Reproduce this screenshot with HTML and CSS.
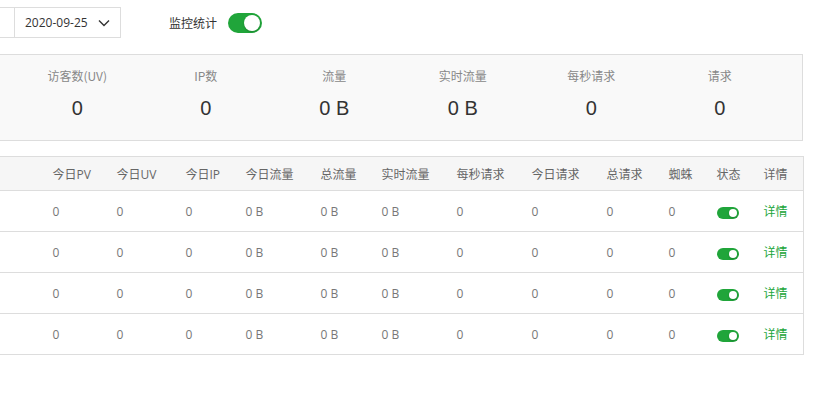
FILE: index.html
```html
<!DOCTYPE html>
<html lang="zh-CN">
<head>
  <meta charset="UTF-8" />
  <meta name="viewport" content="width=device-width, initial-scale=1.0"/>
  <title>网站监控</title>
  <link rel="stylesheet" href="styles.css">
</head>
<body>
  <div class="page">
    <div class="toolbar">
      <div class="site-select"></div>
      <div class="date-select">
        <span>2020-09-25</span>
        <svg class="chevron" width="12" height="8" viewBox="0 0 12 8"><path d="M1 1.5l5 5 5-5" fill="none" stroke="#333" stroke-width="1.4"/></svg>
      </div>
      <label class="monitor">
        <span>监控统计</span>
        <span class="switch big on"></span>
      </label>
    </div>

    <div class="stats">
      <div class="stat"><div class="stat-label">访客数(UV)</div><div class="stat-value">0</div></div>
      <div class="stat"><div class="stat-label">IP数</div><div class="stat-value">0</div></div>
      <div class="stat"><div class="stat-label">流量</div><div class="stat-value">0 B</div></div>
      <div class="stat"><div class="stat-label">实时流量</div><div class="stat-value">0 B</div></div>
      <div class="stat"><div class="stat-label">每秒请求</div><div class="stat-value">0</div></div>
      <div class="stat"><div class="stat-label">请求</div><div class="stat-value">0</div></div>
    </div>

    <table class="sites">
      <colgroup>
        <col style="width: 342px">
        <col style="width: 64px">
        <col style="width: 69px">
        <col style="width: 60px">
        <col style="width: 75px">
        <col style="width: 61px">
        <col style="width: 75px">
        <col style="width: 75px">
        <col style="width: 75px">
        <col style="width: 62px">
        <col style="width: 48px">
        <col style="width: 47px">
        <col style="width: 50px">
      </colgroup>
      <thead>
        <tr>
          <th></th><th>今日PV</th><th>今日UV</th><th>今日IP</th><th>今日流量</th><th>总流量</th><th>实时流量</th><th>每秒请求</th><th>今日请求</th><th>总请求</th><th>蜘蛛</th><th>状态</th><th>详情</th>
        </tr>
      </thead>
      <tbody id="rows"></tbody>
    </table>
  </div>

  <script>
    const siteCount = 4;
    const rows = document.getElementById('rows');

    for (let i = 0; i < siteCount; i++) {
      const tr = document.createElement('tr');
      tr.innerHTML =
        '<td></td>' +
        '<td>0</td><td>0</td><td>0</td><td>0 B</td><td>0 B</td><td>0 B</td>' +
        '<td>0</td><td>0</td><td>0</td><td>0</td>' +
        '<td><span class="switch small on"></span></td>' +
        '<td><a class="detail" href="#">详情</a></td>';
      rows.appendChild(tr);
    }
  </script>
</body>
</html>
```

FILE: styles.css
```css
* {
  margin: 0;
  padding: 0;
  box-sizing: border-box;
}

body {
  font-family: "Open Sans", "Noto Sans CJK SC", sans-serif;
  font-size: 12px;
  color: #666;
  background-color: #fff;
  overflow: hidden;
}

/* the view is scrolled: the left part of the page lies outside the window */
.page {
  margin-left: -300px;
  width: 1103px;
}

.toolbar {
  display: flex;
  align-items: center;
  padding-top: 7px;
  height: 38px;
}

.site-select,
.date-select {
  height: 31px;
  border: 1px solid #ddd;
  display: flex;
  align-items: center;
  color: #333;
}

.site-select {
  width: 180px;
  margin-left: 135px;
}

.date-select {
  width: 107px;
  margin-left: -1px;
  padding-left: 10px;
  gap: 10px;
  font-size: 12px;
}

.chevron {
  margin-top: 1px;
}

.monitor {
  display: flex;
  align-items: center;
  gap: 11px;
  margin-left: 48px;
  color: #333;
}

.switch {
  display: inline-block;
  position: relative;
  border-radius: 20px;
  background-color: #ddd;
  vertical-align: middle;
}

.switch.on {
  background-color: #20a53a;
}

.switch::after {
  content: "";
  position: absolute;
  top: 2px;
  border-radius: 50%;
  background-color: #fff;
  box-shadow: 0 1px 2px rgba(0, 0, 0, 0.2);
}

.switch.big {
  width: 34px;
  height: 20px;
}

.switch.big::after {
  width: 16px;
  height: 16px;
  right: 2px;
}

.switch.small {
  width: 22px;
  height: 12px;
  margin-top: 1px;
}

.switch.small::after {
  width: 8px;
  height: 8px;
  right: 2px;
}

.stats {
  display: flex;
  justify-content: flex-end;
  margin-top: 16px;
  height: 87px;
  border: 1px solid #ddd;
  background-color: #f9f9f9;
  padding-right: 18px;
  margin-left: 150px;
}

.stat {
  width: 128.5px;
  text-align: center;
  padding-top: 13px;
}

.stat-label {
  font-family: "Noto Sans CJK SC", sans-serif;
  font-size: 12px;
  color: #888;
  line-height: 16px;
}

.stat-value {
  font-family: "Liberation Sans", sans-serif;
  font-size: 20px;
  color: #333;
  margin-top: 12px;
  line-height: 24px;
}

.sites {
  margin-top: 15px;
  width: 1103px;
  border-collapse: collapse;
  table-layout: fixed;
  border: 1px solid #ddd;
}

.sites th,
.sites td {
  text-align: left;
  padding-left: 10px;
  white-space: nowrap;
  overflow: hidden;
  font-weight: normal;
}

.sites th {
  height: 34px;
  background-color: #f6f6f6;
  color: #666;
  border-bottom: 1px solid #ddd;
}

.sites td {
  height: 41px;
  color: #777;
  border-bottom: 1px solid #ddd;
}

.detail {
  color: #20a53a;
  text-decoration: none;
}
```
